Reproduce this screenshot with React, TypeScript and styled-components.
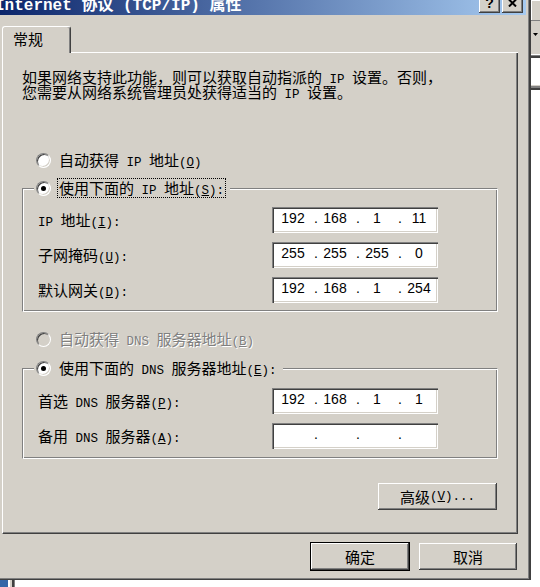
import React from "react";
import styled, { createGlobalStyle } from "styled-components";

const FACE = "#d4d0c8";
const SHADOW = "#808080";
const DARK = "#404040";

const GlobalStyle = createGlobalStyle`
  html, body {
    margin: 0;
    padding: 0;
    background: #fff;
  }
  #root {
    width: 540px;
    height: 587px;
  }
`;

// latin runs are drawn half-width like SimSun; line-height 0 keeps the CJK line box
const Lat = styled.span`
  font-family: "Liberation Mono", monospace;
  font-size: 12.5px;
  line-height: 0;
  white-space: pre;
`;

function mixed(text: string) {
  const out: React.ReactNode[] = [];
  let buf = "";
  let lat = false;
  let key = 0;
  const flush = () => {
    if (!buf) return;
    out.push(lat ? <Lat key={key++}>{buf}</Lat> : <span key={key++}>{buf}</span>);
    buf = "";
  };
  for (let i = 0; i < text.length; i++) {
    const ch = text[i];
    if (ch === "&") {
      flush();
      out.push(
        <Lat key={key++}>
          <u>{text[i + 1]}</u>
        </Lat>
      );
      i++;
      continue;
    }
    const isLat = ch.charCodeAt(0) < 0x80;
    if (isLat !== lat) {
      flush();
      lat = isLat;
    }
    buf += ch;
  }
  flush();
  return out;
}

const ipRows = [
  { label: "IP 地址(&I):", value: ["192", "168", "1", "11"] },
  { label: "子网掩码(&U):", value: ["255", "255", "255", "0"] },
  { label: "默认网关(&D):", value: ["192", "168", "1", "254"] },
];

const dnsRows = [
  { label: "首选 DNS 服务器(&P):", value: ["192", "168", "1", "1"] },
  { label: "备用 DNS 服务器(&A):", value: ["", "", "", ""] },
];

const IpField = ({ value }: { value: string[] }) => (
  <IpBox>
    {value.map((v, i) => (
      <React.Fragment key={i}>
        <Octet>{v}</Octet>
        {i < 3 && <Dot>.</Dot>}
      </React.Fragment>
    ))}
  </IpBox>
);

const App = () => {
  return (
    <Page>
      <GlobalStyle />
      <Window>
        <TitleBar>
          <TitleText>Internet 协议 (TCP/IP) 属性</TitleText>
          <CapButtons>
            <CapButton>?</CapButton>
            <CapButton>
              <svg width="9" height="8" viewBox="0 0 9 8">
                <path d="M1 0.5 L8 7.5 M8 0.5 L1 7.5" stroke="#000" strokeWidth="2" />
              </svg>
            </CapButton>
          </CapButtons>
        </TitleBar>

        <Body>
          <TabRow>
            <Tab>常规</Tab>
            <TabFill />
          </TabRow>

          <Panel>
            <Intro>
              {mixed("如果网络支持此功能，则可以获取自动指派的 IP 设置。否则，")}
              <br />
              {mixed("您需要从网络系统管理员处获得适当的 IP 设置。")}
            </Intro>

            <RadioRow $top={53}>
              <Radio />
              <span>{mixed("自动获得 IP 地址(&O)")}</span>
            </RadioRow>

            <Group $top={10}>
              <GroupHead>
                <HeadStart />
                <Legend>
                  <Radio $checked />
                  <LegendText $focus>{mixed("使用下面的 IP 地址(&S):")}</LegendText>
                </Legend>
                <HeadEnd />
              </GroupHead>
              <GroupBody $pt={9} $pb={8}>
                <FieldGrid>
                  {ipRows.map((r) => (
                    <React.Fragment key={r.label}>
                      <FieldLabel>{mixed(r.label)}</FieldLabel>
                      <IpField value={r.value} />
                    </React.Fragment>
                  ))}
                </FieldGrid>
              </GroupBody>
            </Group>

            <RadioRow $top={19} $disabled>
              <Radio $disabled />
              <span>{mixed("自动获得 DNS 服务器地址(&B)")}</span>
            </RadioRow>

            <Group $top={11}>
              <GroupHead>
                <HeadStart />
                <Legend>
                  <Radio $checked />
                  <LegendText>{mixed("使用下面的 DNS 服务器地址(&E):")}</LegendText>
                </Legend>
                <HeadEnd />
              </GroupHead>
              <GroupBody $pt={10} $pb={9}>
                <FieldGrid>
                  {dnsRows.map((r) => (
                    <React.Fragment key={r.label}>
                      <FieldLabel>{mixed(r.label)}</FieldLabel>
                      <IpField value={r.value} />
                    </React.Fragment>
                  ))}
                </FieldGrid>
              </GroupBody>
            </Group>

            <AdvRow>
              <Button $w={121}>{mixed("高级(&V)...")}</Button>
            </AdvRow>
          </Panel>

          <Footer>
            <Button $w={100} $default>
              确定
            </Button>
            <Button $w={100}>取消</Button>
          </Footer>
        </Body>
      </Window>

      <Strip>
        <StripTop />
        <StripCombo>
          <svg width="5" height="3" viewBox="0 0 5 3">
            <path d="M0 0 H5 L2.5 3 Z" fill="#000" />
          </svg>
        </StripCombo>
        <StripRule />
        <StripWhite />
        <StripRule2 />
        <StripRest />
      </Strip>

      <Bottom />
    </Page>
  );
};

export default App;

const Page = styled.div`
  width: 540px;
  height: 587px;
  overflow: hidden;
  display: grid;
  grid-template-columns: 530px 10px;
  grid-template-rows: 580px 7px;
  background: #fff;
`;

const Window = styled.div`
  margin: -12px 0 0 -9px;
  width: 539px;
  height: 592px;
  box-sizing: border-box;
  overflow: hidden;
  background: ${FACE};
  border: 1px solid;
  border-color: ${FACE} ${DARK} ${DARK} ${FACE};
  box-shadow: inset 1px 1px #fff, inset -1px -1px ${SHADOW};
  padding: 3px;
  display: flex;
  flex-direction: column;
  font-family: "Noto Sans CJK SC", sans-serif;
  font-size: 15px;
  color: #000;
`;

const TitleBar = styled.div`
  height: 23px;
  flex-shrink: 0;
  display: flex;
  align-items: center;
  background: linear-gradient(to right, #0a246a, #a6caf0);
`;

const TitleText = styled.div`
  flex: 1;
  align-self: flex-start;
  margin-top: 5px;
  line-height: 18px;
  font-family: "Liberation Mono", "Noto Sans CJK SC", monospace;
  font-size: 16px;
  font-weight: bold;
  color: #fff;
  white-space: pre;
`;

const CapButtons = styled.div`
  display: flex;
  gap: 2px;
  margin-right: 3px;
`;

const CapButton = styled.div`
  width: 21px;
  height: 18px;
  box-sizing: border-box;
  background: ${FACE};
  box-shadow: inset -1px -1px ${DARK}, inset 1px 1px #fff, inset -2px -2px ${SHADOW},
    inset 2px 2px ${FACE};
  display: flex;
  align-items: center;
  justify-content: center;
  padding-bottom: 1px;
  font-family: "Liberation Sans", sans-serif;
  font-size: 14px;
  font-weight: bold;
  line-height: 1;
`;

const Body = styled.div`
  flex: 1;
  min-height: 0;
  display: flex;
  flex-direction: column;
  padding: 11px 8px 5px 7px;
`;

const TabRow = styled.div`
  display: flex;
  height: 27px;
  flex-shrink: 0;
`;

const Tab = styled.div`
  width: 69px;
  box-sizing: border-box;
  border: 1px solid #fff;
  border-bottom: none;
  border-right-color: ${DARK};
  border-radius: 3px 3px 0 0;
  box-shadow: inset -1px 0 ${SHADOW};
  padding: 0 0 2px 10px;
  display: flex;
  align-items: center;
  line-height: 16px;
  background: ${FACE};
`;

const TabFill = styled.div`
  flex: 1;
  border-bottom: 1px solid #fff;
`;

const Panel = styled.div`
  flex: 1;
  min-height: 0;
  display: flex;
  flex-direction: column;
  border-left: 1px solid #fff;
  border-right: 1px solid ${DARK};
  border-bottom: 1px solid ${DARK};
  box-shadow: inset -1px -1px ${SHADOW};
  padding: 16px 19px 20px 19px;
`;

const Intro = styled.p`
  margin: 0;
  line-height: 15px;
  white-space: nowrap;
`;

const RadioRow = styled.div<{ $top: number; $disabled?: boolean }>`
  display: flex;
  align-items: center;
  gap: 8px;
  height: 16px;
  line-height: 16px;
  margin: ${(p) => p.$top}px 0 0 14px;
  white-space: nowrap;
  color: ${(p) => (p.$disabled ? SHADOW : "#000")};
  text-shadow: ${(p) => (p.$disabled ? "1px 1px 0 #fff" : "none")};
`;

const Radio = styled.span<{ $checked?: boolean; $disabled?: boolean }>`
  width: 15px;
  height: 15px;
  flex-shrink: 0;
  box-sizing: border-box;
  border-radius: 50%;
  border: 1px solid;
  border-color: ${SHADOW} #fff #fff ${SHADOW};
  box-shadow: inset 1px 1px ${DARK}, inset -1px -1px ${FACE};
  background: ${(p) => (p.$disabled ? FACE : "#fff")};
  display: flex;
  align-items: center;
  justify-content: center;

  &::after {
    content: "";
    display: ${(p) => (p.$checked ? "block" : "none")};
    width: 5px;
    height: 5px;
    border-radius: 50%;
    background: #000;
  }
`;

const Group = styled.div<{ $top: number }>`
  margin-top: ${(p) => p.$top}px;
  display: flex;
  flex-direction: column;
  flex-shrink: 0;
`;

const GroupHead = styled.div`
  display: flex;
  height: 20px;
`;

const HeadStart = styled.div`
  width: 12px;
  height: 10px;
  margin-top: 10px;
  box-sizing: border-box;
  border-top: 1px solid ${SHADOW};
  border-left: 1px solid ${SHADOW};
  box-shadow: inset 1px 1px #fff;
`;

const HeadEnd = styled.div`
  flex: 1;
  height: 10px;
  margin-top: 10px;
  box-sizing: border-box;
  border-top: 1px solid ${SHADOW};
  border-right: 1px solid #fff;
  box-shadow: inset 0 1px #fff, inset -1px 0 ${SHADOW};
`;

const Legend = styled.div`
  display: flex;
  align-items: center;
  gap: 6px;
  padding: 0 4px 0 2px;
  white-space: nowrap;
`;

const LegendText = styled.span<{ $focus?: boolean }>`
  border: 1px dotted ${(p) => (p.$focus ? "#000" : "transparent")};
  padding: 1px;
  line-height: 16px;
`;

const GroupBody = styled.div<{ $pt: number; $pb: number }>`
  border: 1px solid;
  border-top: none;
  border-color: ${SHADOW} #fff #fff ${SHADOW};
  box-shadow: inset 1px 0 #fff, inset -1px -1px ${SHADOW};
  padding: ${(p) => p.$pt}px 0 ${(p) => p.$pb}px 15px;
`;

const FieldGrid = styled.div`
  display: grid;
  grid-template-columns: 234px 166px;
  grid-auto-rows: 26px;
  row-gap: 9px;
  align-items: center;
`;

const FieldLabel = styled.div`
  white-space: nowrap;
  line-height: 16px;
`;

const IpBox = styled.div`
  width: 166px;
  height: 26px;
  box-sizing: border-box;
  background: #fff;
  box-shadow: inset 1px 1px ${SHADOW}, inset 2px 2px ${DARK}, inset -1px -1px #fff,
    inset -2px -2px ${FACE};
  display: flex;
  align-items: flex-start;
  padding-left: 4px;
  font-family: "Liberation Sans", sans-serif;
  font-size: 14px;
  line-height: 22px;
`;

const Octet = styled.span`
  width: 34px;
  text-align: center;
`;

const Dot = styled.span`
  width: 8px;
  text-align: right;
`;

const AdvRow = styled.div`
  display: flex;
  justify-content: flex-end;
  margin-top: 23px;
`;

const Button = styled.div<{ $w: number; $default?: boolean }>`
  width: ${(p) => p.$w}px;
  height: 29px;
  flex-shrink: 0;
  box-sizing: border-box;
  background: ${FACE};
  border: 1px solid ${(p) => (p.$default ? "#000" : "transparent")};
  box-shadow: inset -1px -1px ${DARK}, inset 1px 1px #fff, inset -2px -2px ${SHADOW},
    inset 2px 2px ${FACE};
  display: flex;
  align-items: center;
  justify-content: center;
  white-space: nowrap;
  line-height: 16px;
`;

const Footer = styled.div`
  display: flex;
  justify-content: flex-end;
  gap: 8px;
  margin-top: 8px;
  flex-shrink: 0;
`;

const Strip = styled.div`
  display: flex;
  flex-direction: column;
  border-left: 1px solid ${DARK};
  background: #fff;
`;

const StripTop = styled.div`
  height: 20px;
  background: ${FACE};
  border-bottom: 1px solid ${SHADOW};
  box-shadow: inset 1px 1px #fff;
`;

const StripCombo = styled.div`
  height: 33px;
  background: ${FACE};
  display: flex;
  align-items: center;
  justify-content: center;
  padding-bottom: 6px;
  box-sizing: border-box;
`;

const StripRule = styled.div`
  height: 4px;
  box-sizing: border-box;
  border-top: 1px solid #fff;
  border-bottom: 2px solid ${DARK};
  background: ${SHADOW};
`;

const StripWhite = styled.div`
  height: 27px;
  background: #fff;
`;

const StripRule2 = styled.div`
  height: 5px;
  box-sizing: border-box;
  border-top: 1px solid ${FACE};
  border-bottom: 2px solid ${DARK};
  background: ${SHADOW};
`;

const StripRest = styled.div`
  flex: 1;
  background: #fff;
`;

const Bottom = styled.div`
  grid-column: 1 / -1;
  background: linear-gradient(
    to right,
    #3467a8 0 8px,
    #fff 8px 10px,
    ${FACE} 10px 12px,
    ${DARK} 12px 14px,
    ${SHADOW} 14px 15px,
    #fff 15px
  );
`;
